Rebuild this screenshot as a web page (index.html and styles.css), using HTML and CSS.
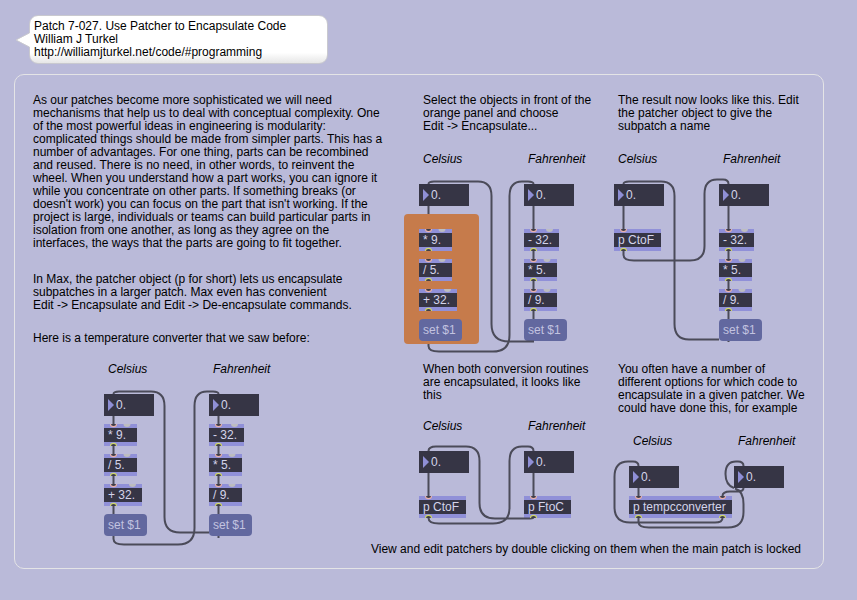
FILE: index.html
```
<!DOCTYPE html>
<html lang="en">
<head>
<meta charset="utf-8">
<title>Patch 7-027. Use Patcher to Encapsulate Code</title>
<link rel="stylesheet" href="styles.css">
</head>
<body>
<svg class="defs" aria-hidden="true">
  <defs>
    <g id="inlet"><path d="M-3.5 0a3.5 3.3 0 0 0 7 0z" fill="#e8b0aa"/><path d="M-2.500 0a2.500 2 0 0 0 5 0z" fill="#3f3e4a"/></g>
    <g id="cold"><path d="M-3.5 0a3.5 3 0 0 0 7 0z" fill="#bdbdc0"/></g>
    <g id="outlet"><path d="M-3.5 0a3.5 3.3 0 0 1 7 0z" fill="#ced66a"/><path d="M-2.500 0a2.500 2 0 0 1 5 0z" fill="#3f3e4a"/></g>
  </defs>
</svg>

<header class="bubble">
  <svg class="tail" viewBox="0 0 15 16" aria-hidden="true"><path d="M15 1L1 8l14 7z" fill="#fff"/><path d="M14 1L1 8l13 7" fill="none" stroke="#c9c9cf"/></svg>
  <h1>Patch 7-027. Use Patcher to Encapsulate Code</h1>
  <p>William J Turkel</p>
  <p>http://williamjturkel.net/code/#programming</p>
</header>

<main class="panel">
  <div class="board">
    <section class="intro">
      <p class="prose">As our patches become more sophisticated we will need mechanisms that help us to deal with conceptual complexity. One of the most powerful ideas in engineering is modularity: complicated things should be made from simpler parts. This has a number of advantages. For one thing, parts can be recombined and reused. There is no need, in other words, to reinvent the wheel. When you understand how a part works, you can ignore it while you concentrate on other parts. If something breaks (or doesn't work) you can focus on the part that isn't working. If the project is large, individuals or teams can build particular parts in isolation from one another, as long as they agree on the interfaces, the ways that the parts are going to fit together.</p>
      <p class="prose">In Max, the patcher object (p for short) lets us encapsulate subpatches in a larger patch. Max even has convenient<br>Edit -&gt; Encapsulate and Edit -&gt; De-encapsulate commands.</p>
      <p class="prose">Here is a temperature converter that we saw before:</p>
      <div class="patch patch-first">
        <div class="chain">
          <label for="c1">Celsius</label>
          <span class="number"><input id="c1" type="text" value="0."></span>
          <span class="object">* 9.</span>
          <span class="object">/ 5.</span>
          <span class="object wide">+ 32.</span>
          <button class="message" type="button">set $1</button>
        </div>
        <div class="chain">
          <label for="f1">Fahrenheit</label>
          <span class="number"><input id="f1" type="text" value="0."></span>
          <span class="object minus">- 32.</span>
          <span class="object">* 5.</span>
          <span class="object">/ 9.</span>
          <button class="message" type="button">set $1</button>
        </div>
        <svg class="cables" aria-hidden="true">
          <path class="cord" d="M105 138.5H76Q60.5 138.5 60.5 123V12Q60.5 -2.5 47 -2.5H15Q9.5 -2.5 9.5 0M9.5 142V145Q9.5 150.500 20 150.500H74Q90.500 150.500 90.500 134V12Q90.500 -2.500 103 -2.500H109Q114.500 -2.500 114.500 0M114.500 142v2"/>
          <path class="cord" d="M9.5 22v8M9.5 52v8M9.5 82v8M9.5 112v8M114.5 22v8M114.5 52v8M114.5 82v8M114.5 112v8"/>
          <use href="#inlet" x="9.5" y="30"/><use href="#cold" x="23" y="30"/><use href="#outlet" x="9.5" y="52"/>
          <use href="#inlet" x="9.5" y="60"/><use href="#cold" x="23" y="60"/><use href="#outlet" x="9.5" y="82"/>
          <use href="#inlet" x="9.5" y="90"/><use href="#cold" x="28.5" y="90"/><use href="#outlet" x="9.5" y="112"/>
          <use href="#inlet" x="114.5" y="30"/><use href="#cold" x="130.5" y="30"/><use href="#outlet" x="114.5" y="52"/>
          <use href="#inlet" x="114.5" y="60"/><use href="#cold" x="128" y="60"/><use href="#outlet" x="114.5" y="82"/>
          <use href="#inlet" x="114.5" y="90"/><use href="#cold" x="128" y="90"/><use href="#outlet" x="114.5" y="112"/>
        </svg>
      </div>
    </section>

    <section class="step">
      <p class="prose">Select the objects in front of the orange panel and choose<br>Edit -&gt; Encapsulate...</p>
      <div class="patch patch-tall spaced">
        <div class="chain selected">
          <label for="c2">Celsius</label>
          <span class="number"><input id="c2" type="text" value="0."></span>
          <span class="object">* 9.</span>
          <span class="object">/ 5.</span>
          <span class="object wide">+ 32.</span>
          <button class="message" type="button">set $1</button>
        </div>
        <div class="chain">
          <label for="f2">Fahrenheit</label>
          <span class="number"><input id="f2" type="text" value="0."></span>
          <span class="object minus">- 32.</span>
          <span class="object">* 5.</span>
          <span class="object">/ 9.</span>
          <button class="message" type="button">set $1</button>
        </div>
        <svg class="cables" aria-hidden="true">
          <path class="cord" d="M115 157.500H90Q72.500 157.500 72.500 140V12Q72.500 -2.500 59 -2.500H15Q9.500 -2.500 9.500 0M9.500 160V162Q9.500 167.500 20 167.500H74Q90.500 167.500 90.500 151V12Q90.500 -2.500 103 -2.500H109Q114.500 -2.500 114.500 0"/>
          <path class="cord" d="M9.500 22v8M114.500 22v23M114.500 67v8M114.500 97v8M114.500 127v8"/>
          <use href="#inlet" x="9.5" y="45"/><use href="#cold" x="23" y="45"/><use href="#outlet" x="9.5" y="67"/>
          <use href="#inlet" x="9.5" y="75"/><use href="#cold" x="23" y="75"/><use href="#outlet" x="9.5" y="97"/>
          <use href="#inlet" x="9.5" y="105"/><use href="#cold" x="28.5" y="105"/><use href="#outlet" x="9.5" y="127"/>
          <use href="#inlet" x="114.5" y="45"/><use href="#cold" x="130.5" y="45"/><use href="#outlet" x="114.5" y="67"/>
          <use href="#inlet" x="114.5" y="75"/><use href="#cold" x="128" y="75"/><use href="#outlet" x="114.5" y="97"/>
          <use href="#inlet" x="114.5" y="105"/><use href="#cold" x="128" y="105"/><use href="#outlet" x="114.5" y="127"/>
        </svg>
      </div>
    </section>

    <section class="step">
      <p class="prose">The result now looks like this. Edit the patcher object to give the subpatch a name</p>
      <div class="patch patch-tall spaced">
        <div class="chain">
          <label for="c3">Celsius</label>
          <span class="number"><input id="c3" type="text" value="0."></span>
          <span class="object sub">p CtoF</span>
        </div>
        <div class="chain">
          <label for="f3">Fahrenheit</label>
          <span class="number"><input id="f3" type="text" value="0."></span>
          <span class="object minus">- 32.</span>
          <span class="object">* 5.</span>
          <span class="object">/ 9.</span>
          <button class="message" type="button">set $1</button>
        </div>
        <svg class="cables" aria-hidden="true">
          <path class="cord" d="M105 155.500H75Q60.500 155.500 60.500 140V12Q60.500 -2.500 47 -2.500H15Q9.500 -2.500 9.500 0M9.500 67V71Q9.500 76.500 20 76.500H76Q90.500 76.500 90.500 62V10Q90.500 -4.500 103 -4.500H109Q114.500 -4.500 114.500 0M114.500 157v1"/>
          <path class="cord" d="M9.500 22v23M114.500 22v23M114.500 67v8M114.500 97v8M114.500 127v8"/>
          <use href="#inlet" x="9.5" y="45"/><use href="#outlet" x="9.5" y="67"/>
          <use href="#inlet" x="114.5" y="45"/><use href="#cold" x="130.5" y="45"/><use href="#outlet" x="114.5" y="67"/>
          <use href="#inlet" x="114.5" y="75"/><use href="#cold" x="128" y="75"/><use href="#outlet" x="114.5" y="97"/>
          <use href="#inlet" x="114.5" y="105"/><use href="#cold" x="128" y="105"/><use href="#outlet" x="114.5" y="127"/>
        </svg>
      </div>
    </section>

    <section class="step">
      <p class="prose snug">When both conversion routines are encapsulated, it looks like this</p>
      <div class="patch spaced">
        <div class="chain">
          <label for="c4">Celsius</label>
          <span class="number"><input id="c4" type="text" value="0."></span>
          <span class="object sub">p CtoF</span>
        </div>
        <div class="chain">
          <label for="f4">Fahrenheit</label>
          <span class="number"><input id="f4" type="text" value="0."></span>
          <span class="object sub">p FtoC</span>
        </div>
        <svg class="cables" aria-hidden="true">
          <path class="cord" d="M114.500 66Q114.500 67.500 111 67.500H76Q60.500 67.500 60.500 52V10Q60.500 -4.500 47 -4.500H17Q9.500 -4.500 9.500 0M9.500 67Q9.500 72.500 20 72.500H74Q90.500 72.500 90.500 57V10Q90.500 -4.500 103 -4.500H109Q114.500 -4.500 114.500 0"/>
          <path class="cord" d="M9.500 22v23M114.500 22v23"/>
          <use href="#inlet" x="9.5" y="45"/><use href="#outlet" x="9.5" y="67"/>
          <use href="#inlet" x="114.5" y="45"/><use href="#outlet" x="114.5" y="67"/>
        </svg>
      </div>
    </section>

    <section class="step">
      <p class="prose">You often have a number of different options for which code to encapsulate in a given patcher. We could have done this, for example</p>
      <div class="patch patch-inset">
        <div class="chain">
          <label for="c5">Celsius</label>
          <span class="number"><input id="c5" type="text" value="0."></span>
          <span class="object both">p tempcconverter</span>
        </div>
        <div class="chain">
          <label for="f5">Fahrenheit</label>
          <span class="number"><input id="f5" type="text" value="0."></span>
        </div>
        <svg class="cables" aria-hidden="true">
          <path class="cord" d="M9.500 22v8M114.500 22Q114.500 25.500 108 25.500H101Q93.500 25.500 93.500 30M93.500 52Q93.500 56.500 86 56.500H1Q-14.500 56.500 -14.500 41V11Q-14.500 -4.500 -1 -4.500H4Q9.500 -4.500 9.500 0M9.500 52V56Q9.500 61.500 20 61.500H99Q114.500 61.500 114.500 46V38Q114.500 25 106 22.500M105 22Q96.500 19 96.500 8Q96.500 -4.500 107 -4.500H109Q114.500 -4.500 114.500 0"/>
          <use href="#inlet" x="9.5" y="30"/><use href="#outlet" x="9.5" y="52"/>
          <use href="#inlet" x="93.5" y="30"/><use href="#outlet" x="93.5" y="52"/>
        </svg>
      </div>
    </section>
  </div>
  <p class="note">View and edit patchers by double clicking on them when the main patch is locked</p>
</main>
</body>
</html>
```
FILE: styles.css
```
* { box-sizing: border-box; }

body {
  margin: 0;
  padding: 15px 33px 31px 14px;
  background: #babad9;
  color: #000;
  font: 12px/13px Arial, "Liberation Sans", sans-serif;
}

h1, p { margin: 0; font-size: 12px; font-weight: 400; }

.defs { position: absolute; width: 0; height: 0; }

.bubble {
  position: relative;
  width: fit-content;
  min-width: 299px;
  margin: 0 0 10px 15px;
  padding: 4px;
  border: 1px solid #c9c9cf;
  border-radius: 9px;
  background: linear-gradient(#fff 78%, #e6e6e6);
}
.tail { position: absolute; left: -15px; top: 16px; width: 15px; height: 16px; }

.panel {
  padding: 19px 14px 12px;
  border: 1px solid #e4e4e6;
  border-radius: 10px;
}

.board {
  display: grid;
  grid-template-columns: 2fr 1fr 1fr;
  grid-template-rows: auto 1fr;
}
.intro { grid-row: 1 / 3; }

.prose { padding-left: 4px; margin-bottom: 20px; }
.prose.snug { padding-right: 16px; margin-bottom: 18px; }
.intro .prose { max-width: 358px; }
.intro .prose:nth-of-type(1) { margin-bottom: 23px; }
.intro .prose:nth-of-type(3) { margin-bottom: 18px; }

.note { padding-right: 8px; text-align: right; }

.patch {
  position: relative;
  display: grid;
  grid-template-columns: 105px 1fr;
}
.patch-first { margin-left: 75px; height: 180px; }
.patch-tall { height: 210px; }
.patch-inset { margin-left: 15px; }

.chain {
  display: flex;
  flex-direction: column;
  align-items: flex-start;
  gap: 8px;
}
.chain label { padding-left: 4px; margin-bottom: 10px; font-style: italic; }
.spaced .number { margin-bottom: 15px; }

.number {
  display: flex;
  align-items: center;
  width: 50px;
  height: 22px;
  padding-left: 4px;
  background: #363545;
}
.number::before {
  content: "";
  width: 6px;
  height: 12px;
  background: #8f8fd6;
  clip-path: polygon(0 0, 100% 50%, 0 100%);
}
.number input {
  width: 38px;
  padding: 0 0 0 2px;
  border: 0;
  background: none;
  color: #d4d4ea;
  font: inherit;
  line-height: 14px;
}

.object {
  width: 33px;
  height: 22px;
  padding-left: 4px;
  border: solid #9090d8;
  border-width: 4px 0;
  background: #363545;
  color: #d4d4ea;
  line-height: 14px;
  white-space: nowrap;
}
.object.minus { width: 35px; }
.object.wide { width: 38px; }
.object.sub { width: 47px; }
.object.both { width: 103px; }

.message {
  width: 43px;
  height: 22px;
  padding: 0 0 0 4px;
  border: 0;
  border-radius: 4px;
  background: #62689f;
  color: #c3c3e0;
  font: inherit;
  text-align: left;
}

/* Orange panel behind the objects to be encapsulated */
.selected { position: relative; z-index: 0; }
.selected::before {
  content: "";
  position: absolute;
  z-index: -1;
  left: -15px;
  top: 61px;
  width: 75px;
  height: 130px;
  border-radius: 4px;
  background: #c67b4b;
}

.cables {
  position: absolute;
  left: 0;
  top: 31px;
  width: 155px;
  height: 150px;
  overflow: visible;
  pointer-events: none;
}
.cord { fill: none; stroke: #4b4b59; stroke-width: 2; }
```
